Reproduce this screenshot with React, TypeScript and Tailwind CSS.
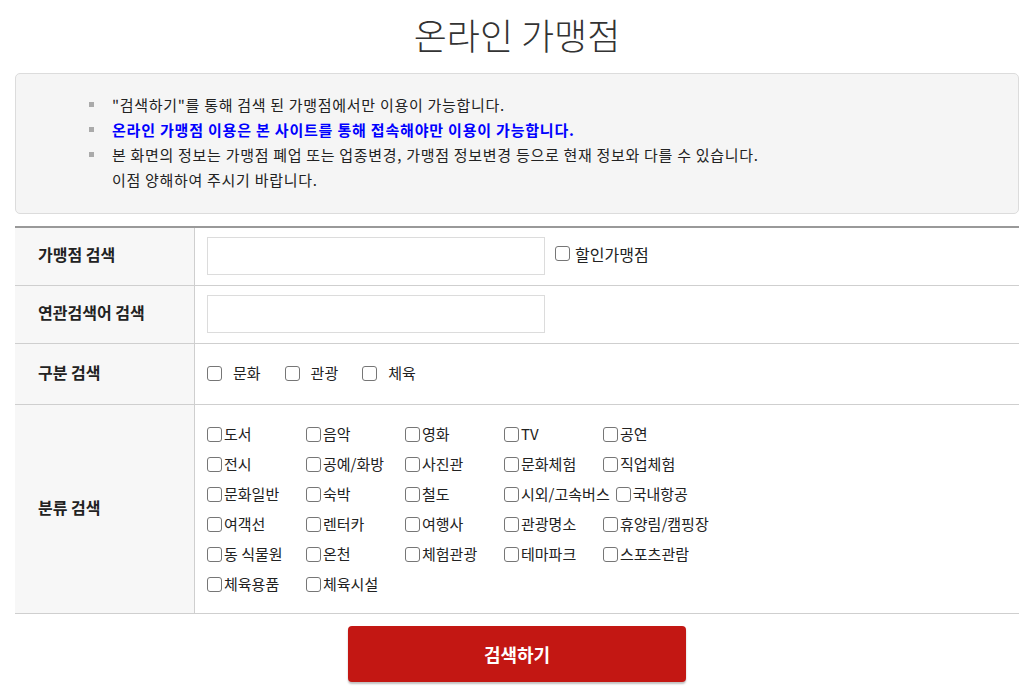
import React from "react";

const font = { fontFamily: '"Noto Sans CJK KR", "Noto Sans", sans-serif' };

function Box() {
  return (
    <span className="inline-block shrink-0 w-[15px] h-[15px] border border-[#767676] rounded-[3px] bg-white" />
  );
}

function Cb({ label, gap = "ml-[3px]", size = "text-[15px]" }: { label: string; gap?: string; size?: string }) {
  return (
    <label className={`inline-flex items-center ${size} text-[#222] whitespace-nowrap`}>
      <Box />
      <span className={gap}>{label}</span>
    </label>
  );
}

const rows = [
  ["도서", "음악", "영화", "TV", "공연"],
  ["전시", "공예/화방", "사진관", "문화체험", "직업체험"],
  ["문화일반", "숙박", "철도", "시외/고속버스", "국내항공"],
  ["여객선", "렌터카", "여행사", "관광명소", "휴양림/캠핑장"],
  ["동 식물원", "온천", "체험관광", "테마파크", "스포츠관람"],
  ["체육용품", "체육시설"],
];

const labelCls =
  "w-[180px] shrink-0 bg-[#f7f7f7] border-r border-[#cfcfcf] flex items-center pl-[23px] pb-[5px] text-[16px] font-bold text-[#222]";

export default function App() {
  return (
    <div className="w-[1032px] bg-white" style={font}>
      <div className="px-[15px] pr-[13px]">
        <h1 className="text-center text-[36px] font-light text-[#333] leading-none pt-[16px] pb-[21px]">
          온라인 가맹점
        </h1>
        <div className="bg-[#f5f5f5] border border-[#dcdcdc] rounded-[5px] h-[141px] pt-[18px] pl-[73px]">
          <ul className="text-[15px] tracking-[0.7px] leading-[25px] text-[#222]">
            <li className="flex items-center">
              <span className="w-[5px] h-[5px] bg-[#aaa] mr-[18px]" />
              "검색하기"를 통해 검색 된 가맹점에서만 이용이 가능합니다.
            </li>
            <li className="flex items-center text-[#0000ff] font-bold tracking-[0.8px]">
              <span className="w-[5px] h-[5px] bg-[#aaa] mr-[18px]" />
              온라인 가맹점 이용은 본 사이트를 통해 접속해야만 이용이 가능합니다.
            </li>
            <li className="flex items-center">
              <span className="w-[5px] h-[5px] bg-[#aaa] mr-[18px]" />
              본 화면의 정보는 가맹점 폐업 또는 업종변경, 가맹점 정보변경 등으로 현재 정보와 다를 수 있습니다.
            </li>
            <li className="pl-[23px]">이점 양해하여 주시기 바랍니다.</li>
          </ul>
        </div>
        <div className="mt-[12px] border-t-2 border-[#999]">
          <div className="flex h-[58px] border-b border-[#cfcfcf]">
            <div className={labelCls}>가맹점 검색</div>
            <div className="flex items-center pl-[12px] pb-[2px]">
              <input type="text" className="w-[338px] h-[38px] border border-[#dcdcdc] outline-none" />
              <span className="ml-[10px] pb-[3px]">
                <Cb label="할인가맹점" gap="ml-[5px]" size="text-[16px]" />
              </span>
            </div>
          </div>
          <div className="flex h-[58px] border-b border-[#cfcfcf]">
            <div className={labelCls}>연관검색어 검색</div>
            <div className="flex items-center pl-[12px] pb-[2px]">
              <input type="text" className="w-[338px] h-[38px] border border-[#dcdcdc] outline-none" />
            </div>
          </div>
          <div className="flex h-[61px] border-b border-[#cfcfcf]">
            <div className={labelCls}>구분 검색</div>
            <div className="flex items-center pl-[12px] pb-[2px] gap-[24px]">
              <Cb label="문화" gap="ml-[11px]" />
              <Cb label="관광" gap="ml-[11px]" />
              <Cb label="체육" gap="ml-[11px]" />
            </div>
          </div>
          <div className="flex h-[209px] border-b border-[#cfcfcf]">
            <div className={labelCls}>분류 검색</div>
            <div className="flex flex-col pl-[12px] pt-[15px]">
              {rows.map((r, i) => (
                <div key={i} className="flex h-[30px] items-center">
                  {r.map((l) => (
                    <div key={l} className="min-w-[99px] pr-[6px]">
                      <Cb label={l} gap="ml-[2px]" />
                    </div>
                  ))}
                </div>
              ))}
            </div>
          </div>
        </div>
        <div className="flex justify-center pt-[12px] pb-[10px]">
          <button className="w-[338px] h-[56px] bg-[#c31713] rounded-[4px] text-white text-[18px] font-bold shadow-[0_2px_2px_rgba(0,0,0,0.25)]">
            검색하기
          </button>
        </div>
      </div>
    </div>
  );
}
